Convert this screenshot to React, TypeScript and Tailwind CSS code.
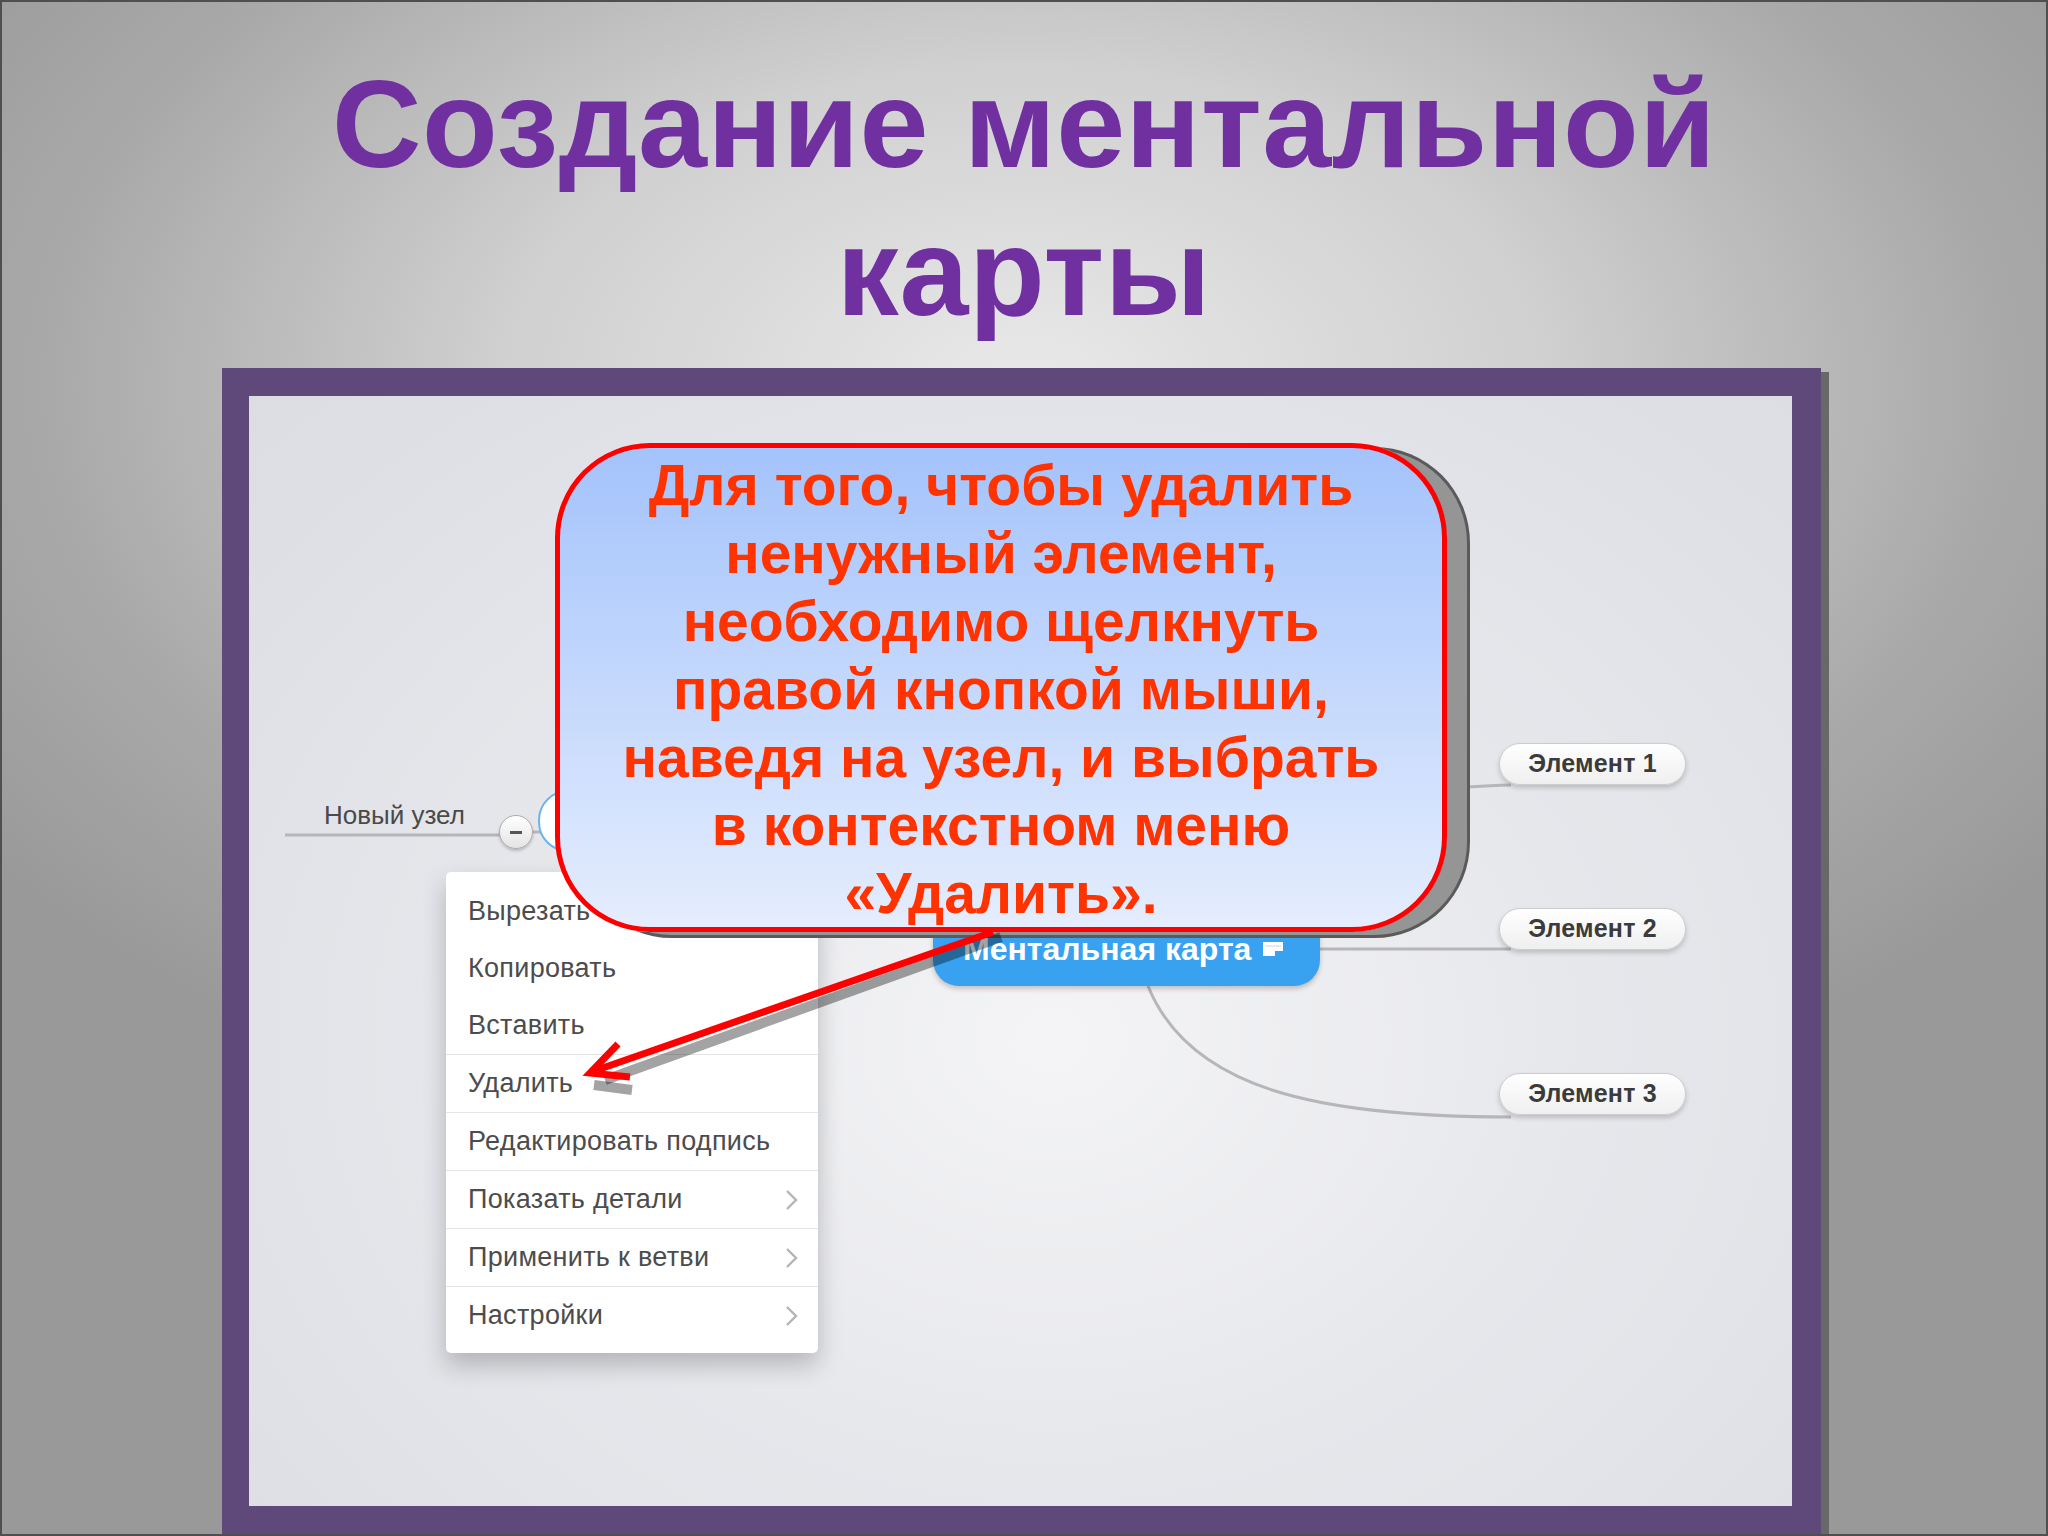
import type { ReactNode } from 'react';

const CALLOUT_LINES = [
  'Для того, чтобы удалить',
  'ненужный элемент,',
  'необходимо щелкнуть',
  'правой кнопкой мыши,',
  'наведя на узел, и выбрать',
  'в контекстном меню',
  '«Удалить».',
];

const MENU_TOP = ['Вырезать', 'Копировать', 'Вставить'];
const MENU_REST: { label: string; sub?: boolean }[] = [
  { label: 'Удалить' },
  { label: 'Редактировать подпись' },
  { label: 'Показать детали', sub: true },
  { label: 'Применить к ветви', sub: true },
  { label: 'Настройки', sub: true },
];

const ELEMENTS = ['Элемент 1', 'Элемент 2', 'Элемент 3'];

function Chevron() {
  return (
    <svg width="13" height="22" viewBox="0 0 13 22" fill="none" aria-hidden>
      <polyline points="2,2 11,11 2,20" stroke="#b4b4b4" strokeWidth="2.4" />
    </svg>
  );
}

function MenuRow({ children, sub, divided }: { children: ReactNode; sub?: boolean; divided?: boolean }) {
  return (
    <div
      className={`flex items-center justify-between pl-[22px] pr-[20px] ${divided ? 'h-[58px] border-t border-[#e4e4e4]' : 'h-[57px]'}`}
    >
      <span className="text-[27px] tracking-[0.3px] text-[#4c4c4c]">{children}</span>
      {sub ? <Chevron /> : null}
    </div>
  );
}

function ContextMenu() {
  return (
    <div className="absolute left-[197px] top-[476px] z-20 h-[481px] w-[372px] rounded-[5px] bg-white pt-[11px] shadow-[0_12px_24px_rgba(0,0,0,0.22)]">
      {MENU_TOP.map((l) => (
        <MenuRow key={l}>{l}</MenuRow>
      ))}
      {MENU_REST.map((r) => (
        <MenuRow divided key={r.label} sub={r.sub}>
          {r.label}
        </MenuRow>
      ))}
    </div>
  );
}

function ElementPill({ label }: { label: string }) {
  return (
    <div className="flex h-[42px] w-[187px] items-center justify-center rounded-full border border-[#cdcdcd] bg-linear-to-b from-white to-[#efefef] shadow-[0_3px_5px_rgba(0,0,0,0.18)]">
      <span className="text-[25px] font-bold tracking-[0.2px] text-[#3b3b3b]">{label}</span>
    </div>
  );
}

function NoteGlyph() {
  return (
    <svg width="20" height="16" viewBox="0 0 20 16" aria-hidden>
      <path d="M0 1 H20 V10 H12 V15 H0 Z" fill="#ffffff" />
      <path d="M2 5 H18" stroke="#cfe6fb" strokeWidth="1.5" />
    </svg>
  );
}

function Connectors() {
  return (
    <svg className="absolute inset-0 z-0" width="1543" height="1110" viewBox="0 0 1543 1110" fill="none" aria-hidden>
      <g stroke="#b6b6b8" strokeWidth="3">
        <path d="M36 439 L268 439" />
        <path d="M284 436 L300 436" />
        <path d="M1000 470 C1100 400, 1160 392, 1262 389" />
        <path d="M1071 553 L1262 553" />
        <path d="M899 590 C941 694, 1071 721, 1262 721" />
      </g>
    </svg>
  );
}

function Arrow() {
  return (
    <svg className="absolute inset-0 z-40" width="1543" height="1110" viewBox="0 0 1543 1110" fill="none" aria-hidden>
      <g stroke="rgba(0,0,0,0.36)" strokeWidth="10" strokeLinejoin="miter">
        <path d="M752 541 L356 684" />
        <path d="M345 689 L383 694" />
      </g>
      <g stroke="#ff0000" strokeWidth="7" strokeLinejoin="miter">
        <path d="M744 536 L348 674" />
        <path d="M369 648 L341 677 L381 681" />
      </g>
    </svg>
  );
}

export default function App() {
  return (
    <div className="flex h-[1536px] w-[2048px] flex-col overflow-hidden border-2 border-[#4f4f4f] bg-[radial-gradient(1300px_800px_at_50%_25%,#e9e9e9_0%,#d0d0d0_40%,#a9a9a9_75%,#999999_100%)] font-['Liberation_Sans',Arial,sans-serif]">
      <h1 className="shrink-0 pt-[48px] text-center text-[124px] font-bold leading-[148px] tracking-[0.5px] text-[#7030a0]">
        Создание ментальной
        <br />
        карты
      </h1>

      <div className="ml-[220px] mt-[22px] flex h-[1166px] w-[1599px] shrink-0 border-b-[28px] border-l-[27px] border-r-[29px] border-t-[28px] border-[#5f497a] shadow-[8px_4px_0_#686868]">
        <div className="relative flex-1 bg-[radial-gradient(ellipse_at_52%_58%,#f4f4f6_0%,#e7e8ec_45%,#dcdde3_100%)]">
          <Connectors />

          {/* "Новый узел" branch: label, collapse button, selected node edge */}
          <div className="absolute left-[75px] top-[394px] z-10 flex h-[62px] items-center">
            <span className="mb-[12px] w-[175px] text-[26px] leading-[36px] text-[#4a4a4a]">Новый узел</span>
            <div className="mt-[22px] flex h-[34px] w-[34px] items-center justify-center rounded-full border border-[#acacac] bg-linear-to-b from-white to-[#e4e4e4] shadow-[0_2px_3px_rgba(0,0,0,0.2)]">
              <span className="h-[3px] w-[12px] bg-[#555]" />
            </div>
            <div className="ml-[5px] h-[62px] w-[140px] rounded-[30px] border-2 border-[#6cb4ee] bg-white" />
          </div>

          <div className="absolute left-[684px] top-[515px] z-10 flex h-[75px] w-[387px] items-center gap-[12px] rounded-[26px] bg-[#39a2f0] pl-[30px] shadow-[0_3px_5px_rgba(0,0,0,0.2)]">
            <span className="text-[32px] font-bold text-white">Ментальная карта</span>
            <NoteGlyph />
          </div>

          <div className="absolute left-[1250px] top-[347px] z-10 flex flex-col gap-[123px]">
            {ELEMENTS.map((e) => (
              <ElementPill key={e} label={e} />
            ))}
          </div>

          <ContextMenu />

          <div className="absolute left-[306px] top-[47px] z-30 flex h-[489px] w-[892px] flex-col items-center rounded-[95px] border-[5px] border-[#ff0000] bg-linear-to-b from-[#a4c3fb] to-[#e5edfd] pt-[3px] shadow-[22px_5px_0_-2px_#959595,22px_5px_0_1px_#5a5a5a]">
            {CALLOUT_LINES.map((line) => (
              <p className="text-[57px] font-bold leading-[68px] text-[#ff3300]" key={line}>
                {line}
              </p>
            ))}
          </div>

          <Arrow />
        </div>
      </div>
    </div>
  );
}
